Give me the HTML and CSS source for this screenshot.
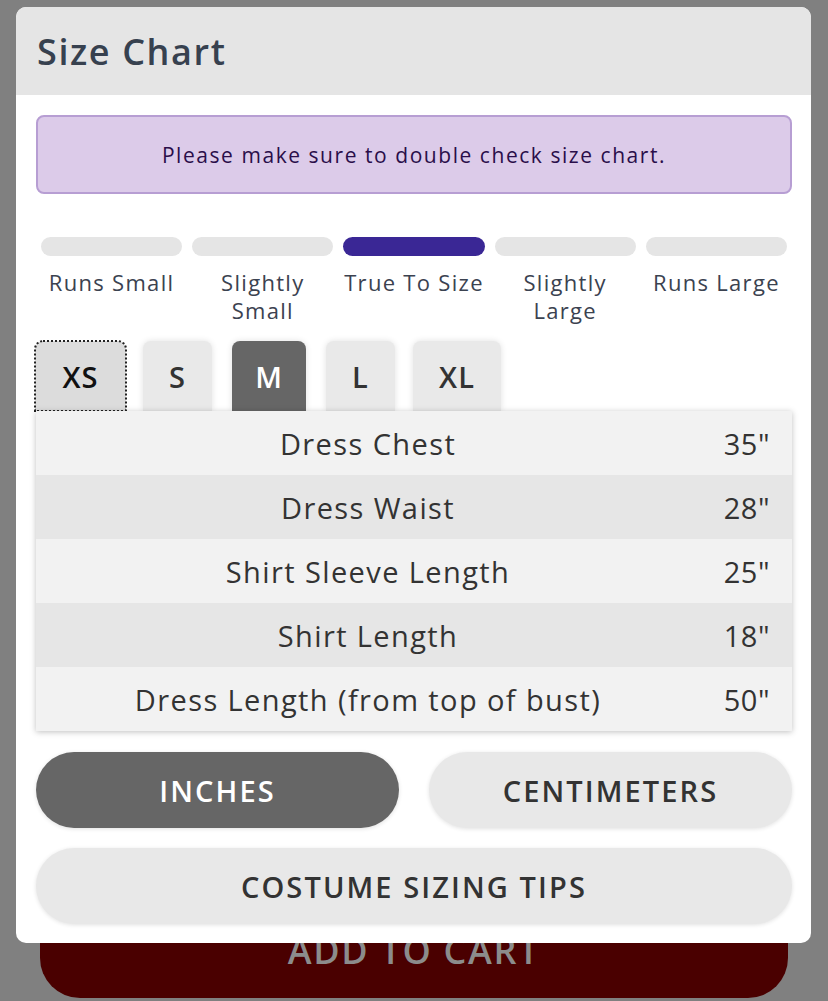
FILE: index.html
```html
<!DOCTYPE html>
<html>
<head>
<meta charset="utf-8">
<link rel="stylesheet" href="styles.css">
</head>
<body>
<div class="page">
  <div class="cart-wrap"><button class="cart">ADD TO CART</button></div>
</div>
<div class="modal">
  <div class="modal-head"><h1>Size Chart</h1></div>
  <div class="modal-body">
    <div class="notice">Please make sure to double check size chart.</div>
    <div class="fit">
      <div class="fit-item"><div class="bar"></div><div class="fit-label">Runs Small</div></div>
      <div class="fit-item"><div class="bar"></div><div class="fit-label">Slightly<br>Small</div></div>
      <div class="fit-item"><div class="bar active"></div><div class="fit-label">True To Size</div></div>
      <div class="fit-item"><div class="bar"></div><div class="fit-label">Slightly<br>Large</div></div>
      <div class="fit-item"><div class="bar"></div><div class="fit-label">Runs Large</div></div>
    </div>
    <div class="tabs">
      <div class="tab focus xs">XS</div>
      <div class="tab s">S</div>
      <div class="tab sel m">M</div>
      <div class="tab l">L</div>
      <div class="tab xl">XL</div>
    </div>
    <div class="table">
      <div class="row"><span class="name">Dress Chest</span><span class="val">35"</span></div>
      <div class="row alt"><span class="name">Dress Waist</span><span class="val">28"</span></div>
      <div class="row"><span class="name">Shirt Sleeve Length</span><span class="val">25"</span></div>
      <div class="row alt"><span class="name">Shirt Length</span><span class="val">18"</span></div>
      <div class="row"><span class="name">Dress Length (from top of bust)</span><span class="val">50"</span></div>
    </div>
    <div class="units">
      <button class="pill dark">INCHES</button>
      <button class="pill">CENTIMETERS</button>
    </div>
    <button class="pill wide">COSTUME SIZING TIPS</button>
  </div>
</div>
</body>
</html>
```
FILE: styles.css
```css
* { box-sizing: border-box; }
html, body { margin: 0; padding: 0; }
body {
  width: 828px;
  height: 1001px;
  background: #808080;
  font-family: "Open Sans", Lato, sans-serif;
  overflow: hidden;
  position: relative;
}
.page {
  height: 1001px;
  padding: 902px 40px 0 40px;
}
.cart-wrap { height: 96px; }
.cart {
  width: 748px;
  height: 96px;
  border: none;
  border-radius: 40px;
  background: #4a0000;
  color: #8c8c8c;
  font-family: "Open Sans", sans-serif;
  font-size: 36px;
  font-weight: 600;
  letter-spacing: 1.7px;
}
.modal {
  position: absolute;
  left: 16px;
  top: 7px;
  width: 795px;
  background: #fff;
  border-radius: 10px;
  overflow: hidden;
}
.modal-head {
  background: #e5e5e5;
  height: 88px;
  display: flex;
  align-items: center;
  padding-left: 21px;
}
.modal-head h1 {
  margin: 0;
  font-size: 36px;
  font-weight: 600;
  color: #37414f;
  letter-spacing: 1.6px;
}
.modal-body {
  padding: 20px 19px 19px 20px;
}
.notice {
  height: 79px;
  background: #dccbe9;
  border: 2px solid #b79ed3;
  border-radius: 8px;
  display: flex;
  align-items: center;
  justify-content: center;
  color: #2a0e4a;
  font-size: 21px;
  letter-spacing: 1.55px;
}
.fit {
  display: flex;
  gap: 10px;
  padding: 0 5px;
  margin-top: 43px;
}
.fit-item { flex: 1; text-align: center; }
.bar {
  height: 19px;
  border-radius: 10px;
  background: #e5e5e5;
}
.bar.active { background: #3a2795; }
.fit-label {
  margin-top: 12px;
  font-size: 22px;
  line-height: 28px;
  color: #3b4250;
  letter-spacing: 1.3px;
}
.tabs {
  display: flex;
  margin-top: 17px;
  height: 70px;
  align-items: stretch;
  margin-left: -1px;
}
.tab {
  display: flex;
  align-items: center;
  justify-content: center;
  background: #e9e9e9;
  border-radius: 8px 8px 0 0;
  font-size: 29px;
  font-weight: 600;
  letter-spacing: 1px;
  color: #333;
  box-shadow: 0 0 6px rgba(0,0,0,0.12);
}
.tab.xs { width: 91px; background: #dcdcdc; color: #111; outline: 2px dotted #222; outline-offset: -1px; box-shadow: none; }
.tab.s { width: 69px; margin-left: 17px; }
.tab.m { width: 74px; margin-left: 20px; }
.tab.l { width: 69px; margin-left: 20px; }
.tab.xl { width: 88px; margin-left: 18px; }
.tab.sel { background: #666; color: #fff; }
.table {
  position: relative;
  box-shadow: 0 1px 6px rgba(0,0,0,0.25);
}
.row {
  display: flex;
  align-items: center;
  height: 64px;
  background: #f2f2f2;
  font-size: 29px;
  color: #333;
}
.row.alt { background: #e6e6e6; }
.name { flex: 1; text-align: center; letter-spacing: 1.4px; }
.val { width: 92px; text-align: right; padding-right: 22px; letter-spacing: 0.5px; }
.units {
  display: flex;
  gap: 30px;
  margin-top: 21px;
}
.pill {
  height: 76px;
  border: none;
  border-radius: 38px;
  background: #e8e8e8;
  color: #333;
  font-family: "Open Sans", sans-serif;
  font-size: 29px;
  font-weight: 600;
  letter-spacing: 2.1px;
  box-shadow: 0 1px 4px rgba(0,0,0,0.12);
  flex: 1;
}
.pill.dark { background: #666; color: #fff; }
.pill.wide { width: 100%; margin-top: 20px; display: block; }
```
